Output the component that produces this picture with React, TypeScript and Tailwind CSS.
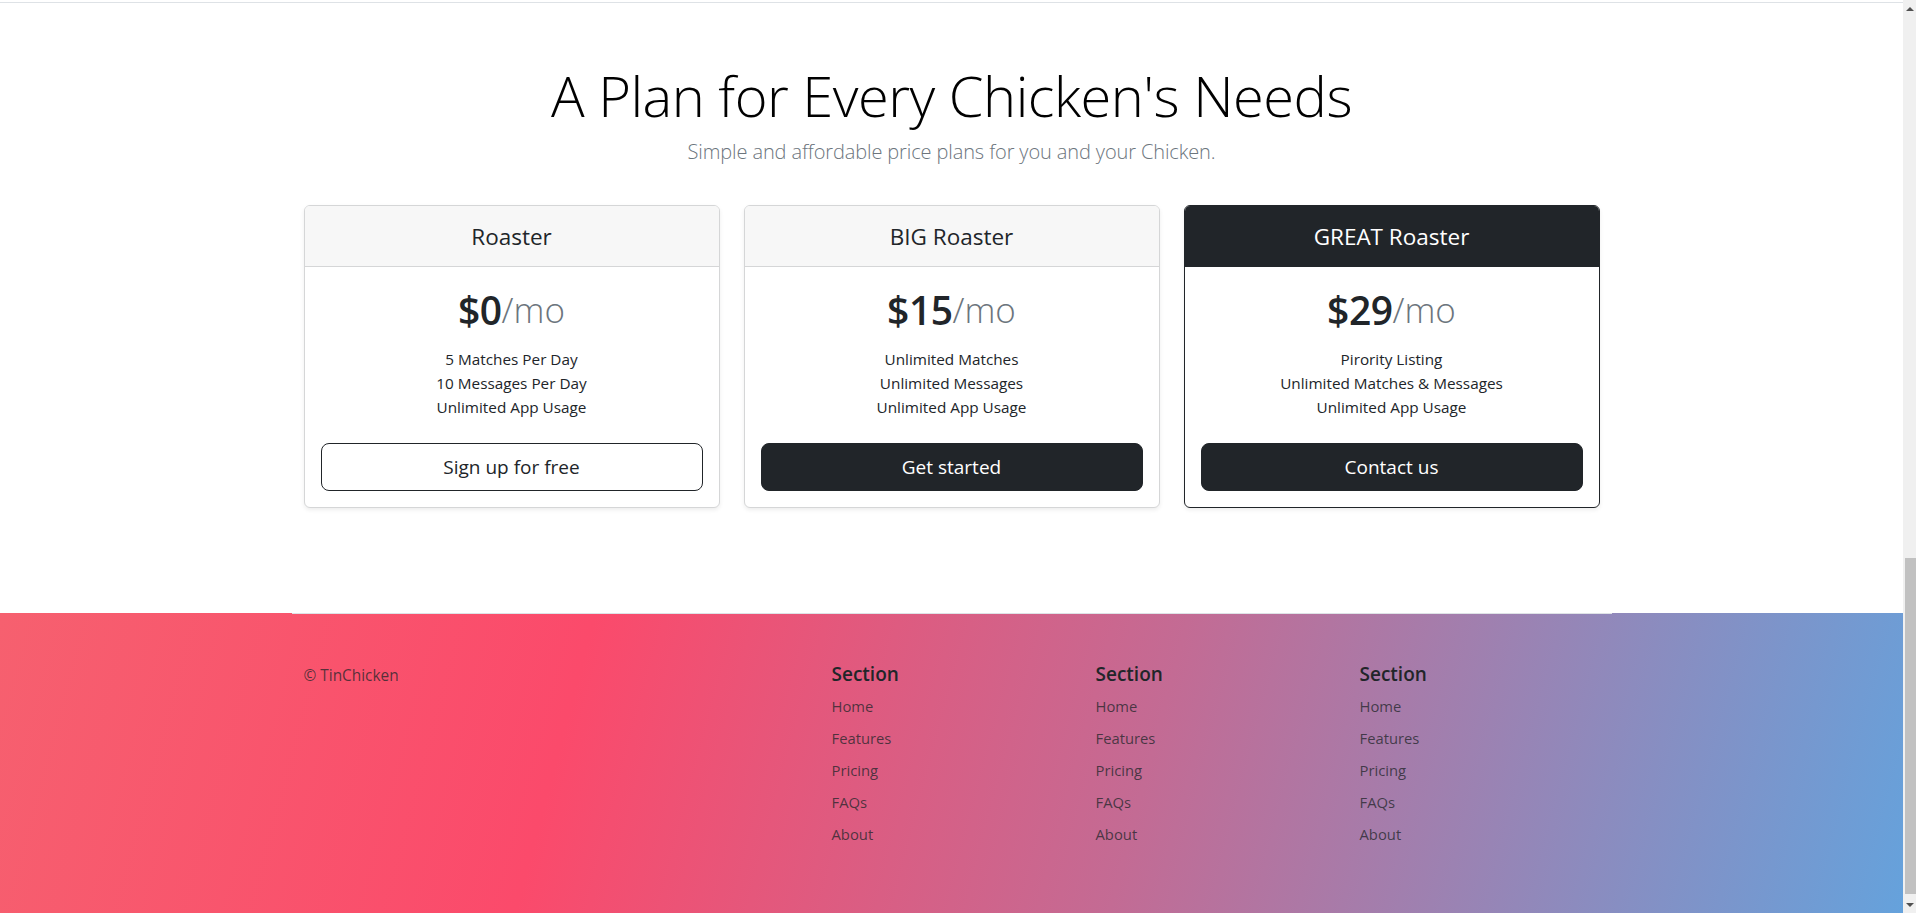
import React from "react";

type Plan = {
  name: string;
  price: string;
  features: string[];
  cta: string;
  variant: "outline" | "solid" | "dark";
};

const plans: Plan[] = [
  {
    name: "Roaster",
    price: "$0",
    features: ["5 Matches Per Day", "10 Messages Per Day", "Unlimited App Usage"],
    cta: "Sign up for free",
    variant: "outline",
  },
  {
    name: "BIG Roaster",
    price: "$15",
    features: ["Unlimited Matches", "Unlimited Messages", "Unlimited App Usage"],
    cta: "Get started",
    variant: "solid",
  },
  {
    name: "GREAT Roaster",
    price: "$29",
    features: ["Pirority Listing", "Unlimited Matches & Messages", "Unlimited App Usage"],
    cta: "Contact us",
    variant: "dark",
  },
];

function Card({ plan }: { plan: Plan }) {
  const dark = plan.variant === "dark";
  return (
    <div
      className={
        dark
          ? "flex flex-col rounded-[6px] border border-[#212529] bg-white shadow-[0_2px_4px_rgba(0,0,0,0.075)] overflow-hidden"
          : "flex flex-col rounded-[6px] border border-[#d5d6d7] bg-white shadow-[0_2px_4px_rgba(0,0,0,0.075)] overflow-hidden"
      }
    >
      <div
        className={
          dark
            ? "h-[61px] flex items-center justify-center bg-[#212529] text-white border-b border-[#212529]"
            : "h-[61px] flex items-center justify-center bg-[#f7f7f7] text-[#212529] border-b border-[#d5d6d7]"
        }
      >
        <h4 className="text-[22.5px] leading-[1.2] font-normal">{plan.name}</h4>
      </div>
      <div className="p-[16px] text-center">
        <h1 className="h-[48px] pt-[6px] flex items-center justify-center text-[39px] leading-[1.2] font-semibold text-[#212529] tracking-[-0.5px]">
          {plan.price}
          <small className="text-[35px] font-light text-[#6c757d] tracking-normal">/mo</small>
        </h1>
        <ul className="mt-[16px] mb-[24px] text-[15.3px] leading-[24px] text-[#212529]">
          {plan.features.map((f) => (
            <li key={f}>{f}</li>
          ))}
        </ul>
        <button
          className={
            plan.variant === "outline"
              ? "w-full h-[48px] rounded-[8px] border border-[#212529] bg-transparent text-[#212529] text-[19px]"
              : "w-full h-[48px] rounded-[8px] border border-[#212529] bg-[#212529] text-white text-[19px]"
          }
        >
          {plan.cta}
        </button>
      </div>
    </div>
  );
}

const links = ["Home", "Features", "Pricing", "FAQs", "About"];

function FooterSection() {
  return (
    <div className="px-[12px]">
      <h5 className="text-[19px] leading-[24px] font-semibold text-[#212529] mb-[8px]">Section</h5>
      <ul>
        {links.map((l) => (
          <li key={l} className="mb-[8px] text-[14.8px] leading-[24px] text-[rgba(33,37,41,0.75)]">
            {l}
          </li>
        ))}
      </ul>
    </div>
  );
}

export default function App() {
  return (
    <div className="flex w-full h-[913px] overflow-hidden bg-white font-['Open_Sans',sans-serif]">
      <div className="flex-1 flex flex-col min-w-0">
        <div className="h-[3px] border-b border-[#dee2e6]" />
        <div className="flex flex-col items-center">
          <h1 className="mt-[59px] text-[56px] leading-[1.2] font-light text-black tracking-[-0.5px]">
            A Plan for Every Chicken's Needs
          </h1>
          <p className="mt-[8px] text-[20px] leading-[30px] font-light text-[#6c757d] tracking-[-0.12px]">
            Simple and affordable price plans for you and your Chicken.
          </p>
        </div>
        <div className="mt-[38px] mx-auto w-[1296px] grid grid-cols-3 gap-[24px]">
          {plans.map((p) => (
            <Card key={p.name} plan={p} />
          ))}
        </div>
        <div className="mt-[105px] flex-1 bg-[linear-gradient(105deg,#f6606f_0%,#fb4a6b_30%,#c36b94_60%,#65a2dc_100%)]">
          <div className="mx-auto w-[1320px] border-t border-[#dee2e6] pt-[48px] grid grid-cols-5">
            <div className="px-[12px]">
              <small className="block pt-[2px] text-[15.4px] leading-[24px] text-[rgba(33,37,41,0.75)]">
                © TinChicken
              </small>
            </div>
            <div />
            <FooterSection />
            <FooterSection />
            <FooterSection />
          </div>
        </div>
      </div>
      <div className="w-[13px] flex flex-col bg-[#f0f0f0]">
        <div className="h-[17px] flex items-center justify-center">
          <div className="w-0 h-0 border-l-[4px] border-r-[4px] border-b-[4px] border-l-transparent border-r-transparent border-b-[#505050]" />
        </div>
        <div className="h-[541px]" />
        <div className="h-[336px] ml-[2px] bg-[#c1c1c1]" />
        <div className="flex-1" />
        <div className="h-[17px] flex items-center justify-center">
          <div className="w-0 h-0 border-l-[4px] border-r-[4px] border-t-[4px] border-l-transparent border-r-transparent border-t-[#505050]" />
        </div>
      </div>
    </div>
  );
}
